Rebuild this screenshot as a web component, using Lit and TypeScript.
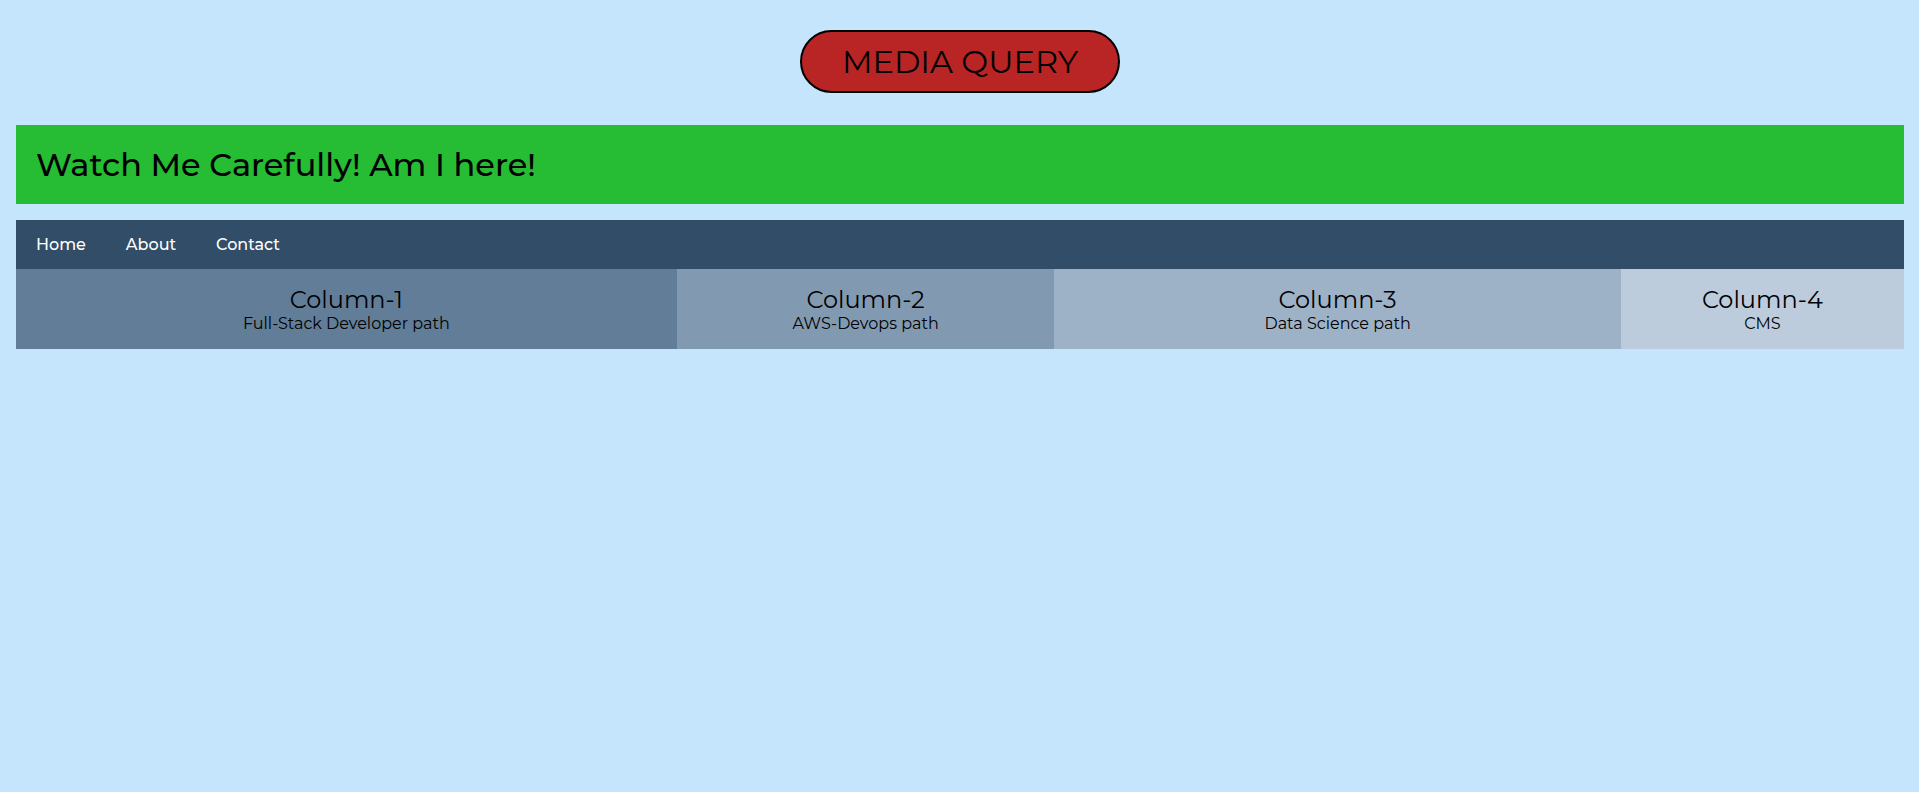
import { LitElement, html, css } from "lit";
import { customElement } from "lit/decorators.js";

const links = ["Home", "About", "Contact"];

const columns = [
  { title: "Column-1", text: "Full-Stack Developer path", tone: "first" },
  { title: "Column-2", text: "AWS-Devops path", tone: "second" },
  { title: "Column-3", text: "Data Science path", tone: "third" },
  { title: "Column-4", text: "CMS", tone: "fourth" },
];

@customElement("app-root")
export class AppRoot extends LitElement {
  static styles = css`
    :host {
      display: block;
      box-sizing: border-box;
      min-height: 100vh;
      padding: 30px 15px 16px 16px;
      background: #c5e5fd;
      color: #000;
      font-family: Montserrat, Inter, sans-serif;
      font-size: 16px;
      font-weight: 400;
      line-height: 19px;
    }
    .title {
      width: fit-content;
      margin: 0 auto 32px;
      padding: 10px 40px;
      border: 2px solid #000;
      border-radius: 32px;
      background: #b92525;
      font-size: 32px;
      font-weight: 400;
      line-height: 39px;
    }
    .banner {
      margin: 0 0 16px;
      padding: 20px;
      background: #26bc33;
      font-size: 32px;
      font-weight: 500;
      line-height: 39px;
    }
    .nav {
      display: flex;
      flex-wrap: wrap;
      background: #324d67;
    }
    .link {
      padding: 15px 20px;
      color: #fff;
      font-weight: 500;
      text-decoration: none;
    }
    .columns {
      display: grid;
      grid-template-columns: 35fr 20fr 30fr 15fr;
    }
    .column {
      padding: 16px;
      text-align: center;
    }
    .heading {
      margin: 0;
      font-size: 24px;
      font-weight: 400;
      line-height: 29px;
    }
    .text {
      margin: 0;
    }
    .first {
      background: #617d98;
    }
    .second {
      background: #829ab1;
    }
    .third {
      background: #9eb2c7;
    }
    .fourth {
      background: #bcccdc;
    }
    @media (max-width: 700px) {
      .columns {
        grid-template-columns: 1fr;
      }
    }
  `;

  render() {
    return html`
      <h1 class="title">MEDIA QUERY</h1>
      <p class="banner">Watch Me Carefully! Am I here!</p>
      <nav class="nav">
        ${links.map((l) => html`<a class="link" href="#${l.toLowerCase()}">${l}</a>`)}
      </nav>
      <main class="columns">
        ${columns.map(
          (c) => html`<section class="column ${c.tone}">
            <h2 class="heading">${c.title}</h2>
            <p class="text">${c.text}</p>
          </section>`
        )}
      </main>
    `;
  }
}
